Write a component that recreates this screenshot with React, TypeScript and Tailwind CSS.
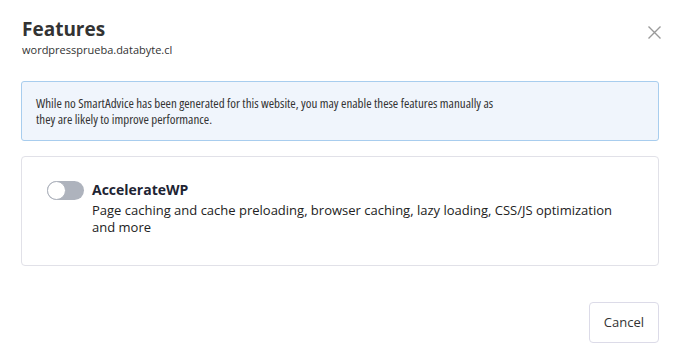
import { useState } from 'react';

export default function App() {
  const [enabled, setEnabled] = useState(false);

  return (
    <div className="w-[680px] h-[363px] bg-white relative font-['Open_Sans',sans-serif] text-[#333]">
      {/* Header */}
      <div className="flex items-start justify-between pl-[22px] pr-[18px] pt-[16px]">
        <div>
          <h2 className="text-[19px] font-bold leading-[26px] text-[#333]">Features</h2>
          <p className="text-[11px] leading-[16px] text-[#333]">wordpressprueba.databyte.cl</p>
        </div>
        <button className="mt-[9px] text-[#9a9a9a]">
          <svg width="15" height="15" viewBox="0 0 15 15" fill="none" stroke="currentColor" strokeWidth="1.4">
            <path d="M1.5 1.5 L13.5 13.5 M13.5 1.5 L1.5 13.5" />
          </svg>
        </button>
      </div>

      <div className="px-[21px] pt-[23px] flex flex-col gap-[15px]">
        {/* Info notice */}
        <div className="border border-[#a8cdee] bg-[#f0f5fc] rounded-[3px] px-[14px] py-[13px]">
          <p className="max-w-[458px] font-stretch-condensed text-[13px] leading-[16px] text-[#333]">
            While no SmartAdvice has been generated for this website, you may enable these features manually as they are likely to improve performance.
          </p>
        </div>

        {/* Feature card */}
        <div className="border border-[#e1e1e8] rounded-[4px] h-[110px] pl-[25px] pr-[40px] pt-[23px] flex gap-[8px]">
          <button
            onClick={() => setEnabled(!enabled)}
            className={`relative mt-[1px] w-[37px] h-[19px] rounded-full shrink-0 ${enabled ? 'bg-[#3b82f6]' : 'bg-[#aeb3bd]'}`}
          >
            <span
              className={`absolute top-0 w-[19px] h-[19px] rounded-full bg-white border border-[#aeb3bd] ${enabled ? 'left-[18px]' : 'left-0'}`}
            />
          </button>
          <div>
            <h3 className="text-[14px] font-bold leading-[20px] text-[#1e2433]">AccelerateWP</h3>
            <p className="text-[13px] leading-[17px] mt-[2px] text-[#222] max-w-[520px]">
              Page caching and cache preloading, browser caching, lazy loading, CSS/JS optimization and more
            </p>
          </div>
        </div>
      </div>

      {/* Footer */}
      <div className="flex justify-end pr-[21px] pt-[36px]">
        <button className="h-[41px] px-[14px] border border-[#dcdbe8] rounded-[4px] text-[13px] text-[#333]">
          Cancel
        </button>
      </div>
    </div>
  );
}
